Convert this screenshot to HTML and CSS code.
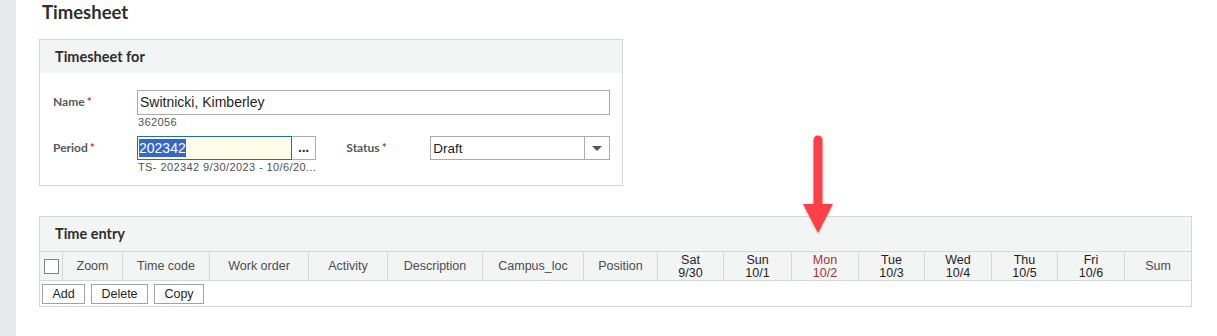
FILE: index.html
```html
<!DOCTYPE html>
<html>
<head>
<meta charset="utf-8">
<link rel="stylesheet" href="styles.css">
</head>
<body>
<div class="page">
  <aside class="strip"></aside>
  <main class="main">
    <h1 class="title">Timesheet</h1>

    <section class="panel panel-for">
      <div class="panel-head">Timesheet for</div>
      <div class="form">
        <div class="row">
          <label class="lbl">Name<span class="req">*</span></label>
          <div class="field">
            <div class="input name-input">Switnicki, Kimberley</div>
            <div class="hint">362056</div>
          </div>
        </div>
        <div class="row row-period">
          <label class="lbl">Period<span class="req">*</span></label>
          <div class="field">
            <div class="combo">
              <div class="input period-input"><span class="sel">202342</span></div>
              <div class="dots">&middot;&middot;&middot;</div>
            </div>
            <div class="hint">TS- 202342 9/30/2023 - 10/6/20...</div>
          </div>
          <label class="lbl lbl-status">Status<span class="req">*</span></label>
          <div class="select">
            <div class="select-val">Draft</div>
            <div class="select-btn"><span class="caret"></span></div>
          </div>
        </div>
      </div>
    </section>

    <section class="panel panel-entry">
      <div class="panel-head panel-head-entry">Time entry</div>
      <div class="grid-head">
        <div class="cell cell-check"><span class="checkbox"></span></div>
        <div class="cell">Zoom</div>
        <div class="cell">Time code</div>
        <div class="cell">Work order</div>
        <div class="cell">Activity</div>
        <div class="cell">Description</div>
        <div class="cell">Campus_loc</div>
        <div class="cell">Position</div>
        <div class="cell day">Sat<br>9/30</div>
        <div class="cell day">Sun<br>10/1</div>
        <div class="cell day mon">Mon<br>10/2</div>
        <div class="cell day">Tue<br>10/3</div>
        <div class="cell day">Wed<br>10/4</div>
        <div class="cell day">Thu<br>10/5</div>
        <div class="cell day">Fri<br>10/6</div>
        <div class="cell">Sum</div>
      </div>
      <div class="actions">
        <button class="btn btn-add">Add</button>
        <button class="btn btn-del">Delete</button>
        <button class="btn btn-copy">Copy</button>
      </div>
    </section>
  </main>
  <svg class="arrow" width="40" height="104" viewBox="0 0 40 104">
    <defs>
      <filter id="sh" x="-30%" y="-10%" width="160%" height="130%">
        <feDropShadow dx="0" dy="1" stdDeviation="1" flood-color="#000" flood-opacity="0.25"/>
      </filter>
    </defs>
    <g filter="url(#sh)">
      <line x1="20" y1="6" x2="20" y2="72" stroke="#fb3f47" stroke-width="9" stroke-linecap="round"/>
      <polygon points="5,70 35,70 20,99" fill="#fb3f47"/>
    </g>
  </svg>
</div>
</body>
</html>
```

FILE: styles.css
```css
html, body {
  margin: 0;
  padding: 0;
  background: #ffffff;
}

body {
  font-family: "Liberation Sans", Arial, sans-serif;
  color: #222;
}

.page {
  position: relative;
  display: flex;
  width: 1217px;
  height: 336px;
  overflow: hidden;
}

.strip {
  width: 16px;
  flex: 0 0 16px;
  background: #e8e9eb;
}

.main {
  flex: 1;
  padding-left: 23px;
}

.title {
  margin: 0 0 15px 3px;
  font-family: Lato, "Liberation Sans", sans-serif;
  font-weight: 700;
  font-size: 18.5px;
  line-height: 24px;
  color: #2e2e2e;
}

.panel {
  box-sizing: border-box;
  border: 1px solid #d5d7d9;
  background: #fff;
}

.panel-for {
  width: 584px;
  padding-bottom: 12px;
}

.panel-head {
  height: 33px;
  background: #f3f4f4;
  padding-left: 15px;
  font-family: Lato, "Liberation Sans", sans-serif;
  font-weight: 700;
  font-size: 14.5px;
  line-height: 33px;
  color: #2e2e2e;
}

.form {
  padding: 17px 0 0 13px;
}

.row {
  display: flex;
  align-items: flex-start;
}

.row-period {
  margin-top: 8px;
}

.lbl {
  width: 84px;
  flex: 0 0 84px;
  font-family: Lato, "Liberation Sans", sans-serif;
  font-weight: 700;
  font-size: 12px;
  line-height: 24px;
  color: #555a5e;
}

.req {
  color: #c0392b;
  margin-left: 2px;
}

.field {
  display: flex;
  flex-direction: column;
}

.input {
  box-sizing: border-box;
  border: 1px solid #a9abad;
  height: 25px;
  padding: 0 2px;
  font-size: 14px;
  line-height: 23px;
  color: #1e1e1e;
  background: #fff;
}

.name-input {
  width: 473px;
}

.hint {
  font-size: 11px;
  line-height: 12px;
  color: #4e5256;
  margin-top: 1px;
  padding-left: 1px;
  letter-spacing: 0.4px;
}

.combo {
  display: flex;
}

.period-input {
  width: 155px;
  height: 24px;
  line-height: 22px;
  border-color: #1f6fa8;
  background: #fefee8;
  padding-left: 1px;
}

.sel {
  background: #3468c8;
  color: #fff;
  padding: 1px 0;
}

.dots {
  box-sizing: border-box;
  width: 24px;
  height: 24px;
  border: 1px solid #a9abad;
  border-left: none;
  text-align: center;
  font-size: 14px;
  font-weight: 700;
  line-height: 28px;
  color: #333;
  letter-spacing: -1px;
}

.lbl-status {
  margin-left: 30px;
}

.select {
  box-sizing: border-box;
  display: flex;
  width: 180px;
  height: 24px;
  border: 1px solid #a9abad;
}

.select-val {
  flex: 1;
  padding-left: 2px;
  font-size: 13.5px;
  line-height: 23px;
  color: #1e1e1e;
}

.select-btn {
  width: 24px;
  border-left: 1px solid #a9abad;
  display: flex;
  align-items: center;
  justify-content: center;
}

.caret {
  width: 0;
  height: 0;
  border-left: 5px solid transparent;
  border-right: 5px solid transparent;
  border-top: 5px solid #555;
}

.panel-entry {
  width: 1153px;
  margin-top: 30px;
}

.panel-head-entry {
  height: 34px;
  line-height: 34px;
}

.grid-head {
  display: grid;
  grid-template-columns: 22px 60px 87px 99px 79px 95px 101px 74px 66px 68px 67px 66px 67px 66px 67px 67px;
  height: 30px;
  box-sizing: border-box;
  border-top: 1px solid #d5d7d9;
  border-bottom: 1px solid #d5d7d9;
  background: #f3f4f4;
}

.cell {
  box-sizing: border-box;
  border-left: 1px solid #d5d7d9;
  display: flex;
  align-items: center;
  justify-content: center;
  text-align: center;
  font-size: 12.5px;
  line-height: 13px;
  color: #4a4d50;
}

.cell-check {
  border-left: none;
  justify-content: flex-start;
  padding-left: 4px;
}

.checkbox {
  box-sizing: border-box;
  width: 15px;
  height: 15px;
  border: 1px solid #7d8387;
  background: #fff;
}

.day {
  color: #1e1e1e;
  padding-top: 1px;
}

.day.mon {
  color: #a3323e;
}

.actions {
  display: flex;
  gap: 6px;
  padding: 3px 2px 2px 2px;
  height: 25px;
  box-sizing: border-box;
}

.btn {
  box-sizing: border-box;
  height: 20px;
  margin: 0;
  padding: 0 8px;
  border: 1px solid #a0a3a6;
  background: #fff;
  font-family: "Liberation Sans", Arial, sans-serif;
  font-size: 12.5px;
  line-height: 18px;
  color: #1e1e1e;
}

.btn-add { width: 43px; }
.btn-del { width: 57px; }
.btn-copy { width: 50px; }

.arrow {
  position: absolute;
  left: 798px;
  top: 134px;
}
```
